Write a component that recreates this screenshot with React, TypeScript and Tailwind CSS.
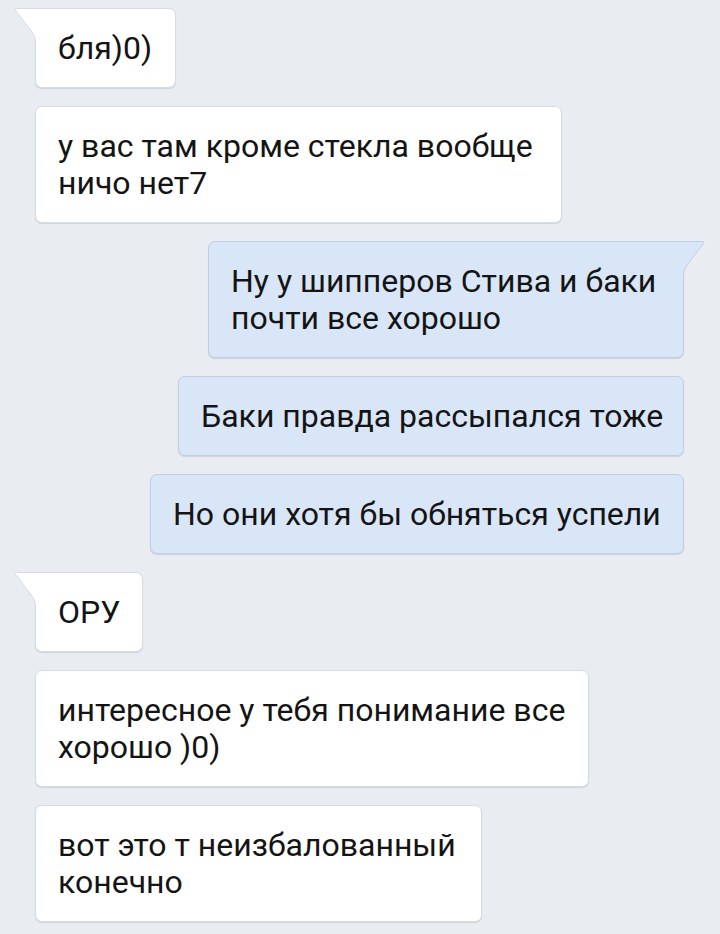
import React from "react";

type Msg = {
  out?: boolean;
  tail?: boolean;
  width: string;
  lines: string[];
};

const messages: Msg[] = [
  { tail: true, width: "w-[141px]", lines: ["бля)0)"] },
  { width: "w-[527px]", lines: ["у вас там кроме стекла вообще", "ничо нет7"] },
  { out: true, tail: true, width: "w-[476px]", lines: ["Ну у шипперов Стива и баки", "почти все хорошо"] },
  { out: true, width: "w-[506px]", lines: ["Баки правда рассыпался тоже"] },
  { out: true, width: "w-[534px]", lines: ["Но они хотя бы обняться успели"] },
  { tail: true, width: "w-[108px]", lines: ["ОРУ"] },
  { width: "w-[554px]", lines: ["интересное у тебя понимание все", "хорошо )0)"] },
  { width: "w-[447px]", lines: ["вот это т неизбалованный", "конечно"] },
];

function Tail({ out }: { out?: boolean }) {
  const fill = out ? "#d9e6f7" : "#ffffff";
  const stroke = out ? "#bfcfe3" : "#d5dce4";
  return (
    <svg
      width="23"
      height="34"
      viewBox="0 0 23 34"
      className={
        out
          ? "absolute top-[-1px] right-[-22px] -scale-x-100"
          : "absolute top-[-1px] left-[-22px]"
      }
    >
      <path d="M23 0.5 L2.5 0.5 Q0.2 0.5 1.4 2.2 L18 24 Q21.5 28.5 21.5 34 L23 34 Z" fill={fill} />
      <path
        d="M23 0.5 L2.5 0.5 Q0.2 0.5 1.4 2.2 L18 24 Q21.5 28.5 21.5 34"
        fill="none"
        stroke={stroke}
        strokeWidth="1"
      />
    </svg>
  );
}

function Bubble({ m }: { m: Msg }) {
  const base =
    "relative border rounded-[7px] pl-[22px] pr-[20px] pt-[21px] pb-[20px] text-[32px] leading-[37px] text-[#141414] shadow-[0_1px_1px_rgba(120,135,155,0.25)]";
  const color = m.out
    ? "bg-[#d9e6f7] border-[#bfcfe3]"
    : "bg-white border-[#d5dce4]";
  const corner = m.tail ? (m.out ? "rounded-tr-none" : "rounded-tl-none") : "";
  return (
    <div className={`flex ${m.out ? "justify-end pr-[36px]" : "pl-[35px]"}`}>
      <div className={`${base} ${color} ${corner} ${m.width}`}>
        {m.tail && <Tail out={m.out} />}
        {m.lines.map((l, i) => (
          <div key={i} className="whitespace-nowrap">
            {l}
          </div>
        ))}
      </div>
    </div>
  );
}

export default function App() {
  return (
    <div
      className="w-[720px] h-[934px] bg-[#e9edf1] overflow-hidden pt-[8px] flex flex-col gap-[18px]"
      style={{ fontFamily: "Roboto, 'Noto Sans', sans-serif" }}
    >
      {messages.map((m, i) => (
        <Bubble key={i} m={m} />
      ))}
    </div>
  );
}
